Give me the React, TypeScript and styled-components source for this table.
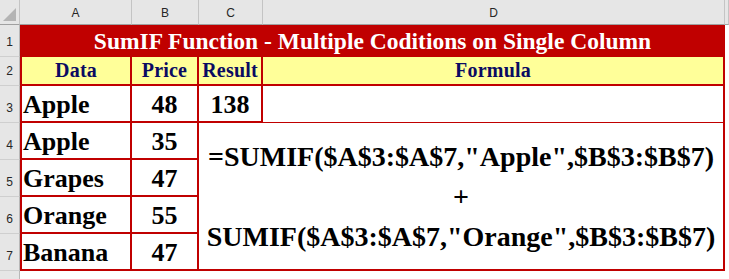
import React from "react";
import styled, { createGlobalStyle, css } from "styled-components";

const GlobalStyle = createGlobalStyle`
  html, body { margin: 0; padding: 0; background: #ffffff; }
  body { width: 729px; height: 279px; overflow: hidden; }
`;

const RED = "#c00000";
const NAVY = "#0b0b62";
const SERIF = `"Liberation Serif", "Times New Roman", serif`;
const SANS = `"Liberation Sans", Arial, sans-serif`;

type Place = { $c: number; $r: number; $cs?: number; $rs?: number };

const place = css<Place>`
  grid-column: ${(p) => `${p.$c} / span ${p.$cs ?? 1}`};
  grid-row: ${(p) => `${p.$r} / span ${p.$rs ?? 1}`};
`;

const Sheet = styled.div`
  display: grid;
  grid-template-columns: 20px 112px 67px 64px 462px 4px;
  grid-template-rows: 25px 32px 29px 37px 37px 37px 37px 37px 8px;
  width: 729px;
  height: 279px;
  background: #ffffff;
`;

const Corner = styled.div<Place>`
  ${place};
  position: relative;
  background: #e6e6e6;
  border-right: 1px solid #c4c4c4;
  border-bottom: 1px solid #a0a0a0;
  box-sizing: border-box;
`;

const CornerMark = styled.svg`
  position: absolute;
  right: 3px;
  bottom: 3px;
`;

const ColHead = styled.div<Place>`
  ${place};
  display: flex;
  align-items: center;
  justify-content: center;
  background: #e6e6e6;
  border-right: 1px solid #c4c4c4;
  border-bottom: 1px solid #a0a0a0;
  box-sizing: border-box;
  font-family: ${SANS};
  font-size: 12px;
  color: #262626;
  padding-top: 1px;
`;

const RowHead = styled.div<Place>`
  ${place};
  display: flex;
  align-items: flex-end;
  justify-content: center;
  background: #e6e6e6;
  border-right: 1px solid #b8b8b8;
  border-bottom: 1px solid #cfcfcf;
  box-sizing: border-box;
  font-family: ${SANS};
  font-size: 12px;
  line-height: 12px;
  color: #262626;
  padding-bottom: 8px;
`;

const Title = styled.div<Place>`
  ${place};
  display: flex;
  align-items: center;
  justify-content: center;
  background: ${RED};
  color: #ffffff;
  font-family: ${SERIF};
  font-weight: bold;
  font-size: 23.5px;
  padding-top: 1px;
  box-sizing: border-box;
`;

const HeadCell = styled.div<Place & { $first?: boolean }>`
  ${place};
  display: flex;
  align-items: center;
  justify-content: center;
  background: #ffff99;
  border-right: 2px solid ${RED};
  border-bottom: 2px solid ${RED};
  ${(p) => p.$first && `border-left: 2px solid ${RED};`}
  box-sizing: border-box;
  color: ${NAVY};
  font-family: ${SERIF};
  font-weight: bold;
  font-size: 20px;
  letter-spacing: 0.2px;
`;

const DataCell = styled.div<
  Place & { $first?: boolean; $center?: boolean; $thin?: boolean }
>`
  ${place};
  display: flex;
  align-items: flex-end;
  justify-content: ${(p) => (p.$center ? "center" : "flex-start")};
  background: #ffffff;
  border-right: 2px solid ${RED};
  border-bottom: ${(p) => (p.$thin ? 1 : 2)}px solid ${RED};
  ${(p) => p.$first && `border-left: 2px solid ${RED};`}
  box-sizing: border-box;
  padding: 0 0 3px ${(p) => (p.$center ? 0 : 1)}px;
  color: #000000;
  font-family: ${SERIF};
  font-weight: bold;
  font-size: 26px;
  line-height: 26px;
`;

const FormulaCell = styled.div<Place>`
  ${place};
  display: flex;
  flex-direction: column;
  align-items: center;
  justify-content: center;
  background: #ffffff;
  border-right: 2px solid ${RED};
  border-bottom: 2px solid ${RED};
  box-sizing: border-box;
  padding-top: 2px;
  color: #000000;
  font-family: ${SERIF};
  font-weight: bold;
  font-size: 28px;
`;

const FormulaLine = styled.div`
  line-height: 40px;
  white-space: nowrap;
`;

const Blank = styled.div<Place>`
  ${place};
  background: #ffffff;
`;

const rows: [string, number][] = [
  ["Apple", 48],
  ["Apple", 35],
  ["Grapes", 47],
  ["Orange", 55],
  ["Banana", 47],
];

export default function App() {
  return (
    <>
      <GlobalStyle />
      <Sheet>
        <Corner $c={1} $r={1}>
          <CornerMark width="13" height="13" viewBox="0 0 13 13">
            <polygon points="13,0 13,13 0,13" fill="#b4b4b4" />
          </CornerMark>
        </Corner>
        {["A", "B", "C", "D"].map((l, i) => (
          <ColHead key={l} $c={i + 2} $r={1}>
            {l}
          </ColHead>
        ))}
        <ColHead $c={6} $r={1} />

        {[1, 2, 3, 4, 5, 6, 7].map((n) => (
          <RowHead key={n} $c={1} $r={n + 1}>
            {n}
          </RowHead>
        ))}
        <RowHead $c={1} $r={9} />

        <Title $c={2} $r={2} $cs={4}>
          SumIF Function - Multiple Coditions on Single Column
        </Title>

        <HeadCell $c={2} $r={3} $first>
          Data
        </HeadCell>
        <HeadCell $c={3} $r={3}>
          Price
        </HeadCell>
        <HeadCell $c={4} $r={3}>
          Result
        </HeadCell>
        <HeadCell $c={5} $r={3}>
          Formula
        </HeadCell>

        {rows.map(([name, price], i) => (
          <React.Fragment key={i}>
            <DataCell $c={2} $r={i + 4} $first>
              {name}
            </DataCell>
            <DataCell $c={3} $r={i + 4} $center>
              {price}
            </DataCell>
          </React.Fragment>
        ))}

        <DataCell $c={4} $r={4} $center>
          138
        </DataCell>
        <DataCell $c={5} $r={4} $thin />

        <FormulaCell $c={4} $r={5} $cs={2} $rs={4}>
          <FormulaLine>=SUMIF($A$3:$A$7,"Apple",$B$3:$B$7)</FormulaLine>
          <FormulaLine>+</FormulaLine>
          <FormulaLine>SUMIF($A$3:$A$7,"Orange",$B$3:$B$7)</FormulaLine>
        </FormulaCell>

        {[2, 3, 4, 5, 6, 7, 8, 9].map((r) => (
          <Blank key={r} $c={6} $r={r} />
        ))}
        {[2, 3, 4, 5].map((c) => (
          <Blank key={`b${c}`} $c={c} $r={9} />
        ))}
      </Sheet>
    </>
  );
}
